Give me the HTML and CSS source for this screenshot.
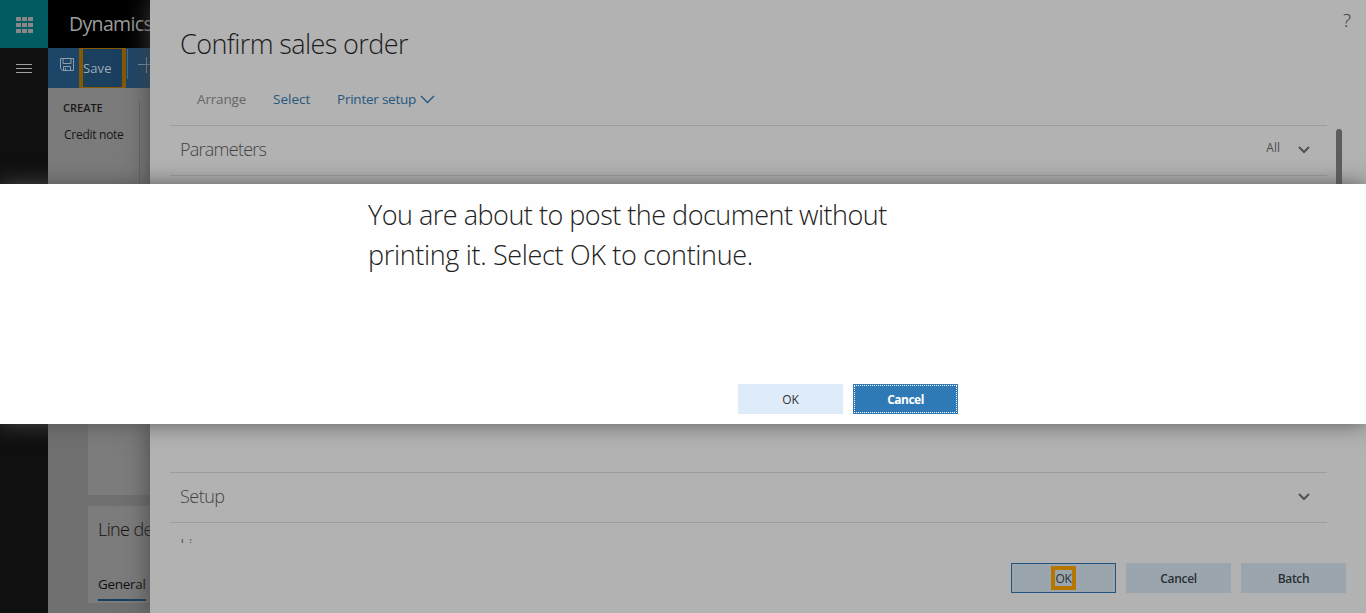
FILE: index.html
```html
<!DOCTYPE html>
<html lang="en">
<head>
<meta charset="utf-8">
<title>Confirm sales order</title>
<link rel="stylesheet" href="styles.css">
</head>
<body>
<div class="app">
  <nav class="rail">
    <div class="waffle"><svg width="17" height="17" viewBox="0 0 17 17"><path d="M0 0h5v4H0zM6 0h5v4H6zM12 0h5v4h-5zM0 6h5v4H0zM6 6h5v4H6zM12 6h5v4h-5zM0 12h5v4H0zM6 12h5v4H6zM12 12h5v4h-5z" fill="#878787"/></svg></div>
    <div class="burger"><svg width="16" height="10" viewBox="0 0 16 10"><path d="M0 .5h16M0 4.500h16M0 8.500h16" stroke="#a0a0a0"/></svg></div>
  </nav>
  <div class="workspace">
    <header class="brand">Dynamics</header>
    <div class="actions">
      <svg class="disk" width="14" height="14" viewBox="0 0 14 14" fill="none" stroke="#8c9eab"><path d="M.5 .5h13v12H2.500l-2-2zM3 .5v5h8v-5M3.500 12.500v-4h7v4M5.500 10v2.500"/></svg>
      <div class="save"><span>Save</span></div>
      <i class="bar"></i>
      <svg class="plus" width="16" height="16" viewBox="0 0 16 16"><path d="M8.500 0v16M0 7.500h16" stroke="#7f919e"/></svg>
    </div>
    <section class="ribbon">
      <div class="group"><h4>CREATE</h4><p>Credit note</p></div>
    </section>
    <section class="canvas">
      <div class="card blank"></div>
      <div class="card details"><h3>Line de</h3><span class="tab">General</span></div>
    </section>
  </div>
</div>

<main class="panel">
  <div class="top"><h1>Confirm sales order</h1><span class="help">?</span></div>
  <div class="commands">
    <span class="arrange">Arrange</span><span class="select">Select</span><span class="printer">Printer setup</span>
    <svg width="15" height="9" viewBox="0 0 15 9"><path d="M1 1l6.500 6.500L14 1" fill="none" stroke="#27577e" stroke-width="1.400"/></svg>
  </div>
  <div class="body">
    <div class="sections">
      <div class="row"><span class="name">Parameters</span><span class="all">All</span><svg width="12" height="8" viewBox="0 0 12 8"><path d="M1 1l5 5 5-5" fill="none" stroke="#515151" stroke-width="2"/></svg></div>
      <div class="row space"></div>
      <div class="row"><span class="name setup">Setup</span><svg width="12" height="8" viewBox="0 0 12 8"><path d="M1 1l5 5 5-5" fill="none" stroke="#515151" stroke-width="2"/></svg></div>
      <div class="row cut"><span class="name">Li</span></div>
    </div>
    <div class="track"></div>
  </div>
  <footer class="buttons">
    <div class="btn primary"><span>OK</span></div>
    <div class="btn">Cancel</div>
    <div class="btn">Batch</div>
  </footer>
</main>

<section class="message">
  <div class="content">
    <p><span class="l1">You are about to post the document without</span><br><span class="l2">printing it. Select OK to continue.</span></p>
    <div class="choices"><div class="choice">OK</div><div class="choice focus"><span>Cancel</span></div></div>
  </div>
</section>
</body>
</html>
```
FILE: styles.css
```css
* { box-sizing: border-box; }
body { margin: 0; height: 613px; overflow: hidden; position: relative; font-family: "Open Sans", "Noto Sans", sans-serif; background: #6f6f6f; }
h1, h3, h4, p { margin: 0; font-weight: 400; }
svg { display: block; flex: none; }
span { white-space: nowrap; }

.app { display: flex; height: 613px; }
.rail { width: 48px; background: #101010; }
.waffle { height: 48px; padding: 17px 0 0 16px; background: #005c61; }
.burger { padding: 16px 0 0 16px; }
.workspace { width: 106px; flex: none; white-space: nowrap; }
.brand { height: 48px; background: #000; color: #9c9c9c; font-size: 19.500px; line-height: 48px; padding-left: 21px; letter-spacing: -.65px; }
.actions { height: 40px; display: flex; background: #1d4567; }
.disk { margin: 10px 0 0 12px; }
.save { width: 47px; margin-left: 5px; flex: none; border: solid #865800; border-width: 1px 4px; background: #1b3f5e; color: #9bacb8; font-size: 13px; line-height: 38px; letter-spacing: .1px; }
.bar { width: 1px; height: 30px; margin: 1px 0 0 1px; background: #4c6c82; flex: none; }
.plus { margin: 9px 0 0 10px; }
.ribbon { height: 96px; background: #7b7b7b; padding-top: 12px; }
.group { width: 92px; height: 84px; padding-left: 15px; border-right: 1px solid #666; }
.group h4 { font-size: 11px; font-weight: 600; line-height: 16px; color: #191919; }
.group p { font-size: 12px; line-height: 20px; padding: 9px 0 0 1px; color: #171717; letter-spacing: -.27px; }
.canvas { padding-left: 40px; background: #707070; height: 429px; }
.card { background: #7c7c7c; }
.blank { height: 311px; }
.details { height: 97px; margin-top: 11px; padding: 8px 0 0 10px; }
.details h3 { font-size: 18px; line-height: 30px; font-weight: 300; color: #111; letter-spacing: -.6px; }
.tab { display: block; width: 48px; margin-top: 28px; height: 29px; font-size: 13.500px; line-height: 25px; border-bottom: 2px solid #173f61; color: #101010; letter-spacing: -.3px; }

.panel { position: absolute; inset: 0 0 0 150px; background: #b2b2b2; box-shadow: 0 0 22px 2px rgba(65,65,65,.8); display: flex; flex-direction: column; }
.top { height: 80px; display: flex; justify-content: space-between; padding: 24px 15px 0 30px; }
h1 { font-size: 27px; font-weight: 300; line-height: 40px; color: #1c1c1c; letter-spacing: -.6px; }
.help { font-size: 19px; font-weight: 300; line-height: 28px; margin-top: -18px; color: #333; }
.commands { height: 45px; display: flex; align-items: center; padding: 0 0 7px 47px; font-size: 13.500px; color: #27577e; }
.arrange { width: 76px; color: #666; letter-spacing: -.15px; }
.select { width: 64px; }
.printer { width: 83px; letter-spacing: -.23px; }
.body { height: 418px; display: flex; }
.sections { width: 1157px; margin-left: 20px; overflow: hidden; }
.row { height: 50px; display: flex; align-items: center; border-top: 1px solid #9d9d9d; padding: 0 17px 3px 10px; color: #444; }
.row svg { margin-top: 1px; }
.name { font-size: 18px; font-weight: 300; flex: 1; letter-spacing: -.75px; }
.setup { letter-spacing: -.5px; }
.all { font-size: 12px; line-height: 16px; margin: -2px 18px 0 0; color: #4d4d4d; }
.space { height: 297px; }
.cut { height: 21px; overflow: hidden; align-items: flex-start; padding: 10px 0 0 10px; }
.track { width: 6px; height: 200px; border-radius: 3px; margin: 4px 0 0 9px; background: #5d5d5d; }
.buttons { display: flex; justify-content: flex-end; gap: 10px; padding: 20px 20px 0 0; }
.btn, .choice { width: 105px; height: 30px; display: flex; align-items: center; justify-content: center; font-size: 12px; }
.btn { background: #9ba5ae; color: #2a2f34; font-weight: 600; letter-spacing: -.3px; }
.primary { border: 1px solid #205481; }
.primary span { width: 25px; height: 24px; border: 4px solid #b67700; display: grid; place-content: center; font-weight: 400; }

.message { position: absolute; inset: 184px 0 189px; background: #fefefe; box-shadow: 0 0 20px rgba(80,80,80,.9); padding-left: 368px; }
.content { width: 590px; padding-top: 11px; }
.content p { height: 189px; font-size: 27px; font-weight: 300; line-height: 40px; color: #222; }
.l1 { letter-spacing: -.5px; }
.l2 { letter-spacing: -.34px; }
.choices { display: flex; justify-content: flex-end; gap: 10px; }
.choice { background: #deebf8; color: #333; }
.focus { background: #2e79b6; color: #fff; padding: 1px; font-weight: 700; }
.focus span { flex: 1; height: 28px; border: 1px dotted #fff; line-height: 27px; text-align: center; letter-spacing: -.5px; }
```
